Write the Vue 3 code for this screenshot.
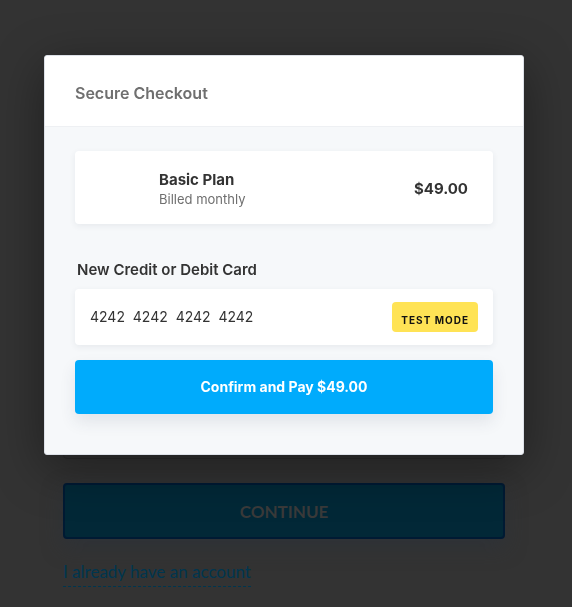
<script setup>
import { ref } from 'vue'

const plan = { name: 'Basic Plan', billing: 'Billed monthly', price: '$49.00' }
const cardNumber = ref('4242\u00a0 4242\u00a0 4242\u00a0 4242')
const email = ref('')
</script>

<template>
  <div class="page">
    <main class="signup">
      <input v-model="email" class="field" type="email" aria-label="Email" />
      <button class="continue" type="button">CONTINUE</button>
      <a class="login" href="#login">I already have an account</a>
    </main>

    <div class="overlay">
      <section class="dialog" role="dialog" aria-modal="true" aria-labelledby="checkout-title">
        <header class="head">
          <h1 id="checkout-title" class="title">Secure Checkout</h1>
        </header>
        <form class="body" @submit.prevent>
          <div class="plan">
            <div class="plan-text">
              <h2 class="plan-name">{{ plan.name }}</h2>
              <p class="plan-billing">{{ plan.billing }}</p>
            </div>
            <strong class="price">{{ plan.price }}</strong>
          </div>
          <label class="label" for="card-number">New Credit or Debit Card</label>
          <div class="card">
            <input id="card-number" v-model="cardNumber" class="number" type="text" inputmode="numeric" />
            <span class="badge">TEST MODE</span>
          </div>
          <button class="pay" type="submit">Confirm and Pay {{ plan.price }}</button>
        </form>
      </section>
    </div>
  </div>
</template>

<style>
body {
  margin: 0;
  background: #333333;
}
</style>

<style scoped>
* {
  box-sizing: border-box;
}

.page {
  min-height: 100vh;
  background: #333333;
  font-family: Lato, "Liberation Sans", sans-serif;
}

.signup {
  display: flex;
  flex-direction: column;
  align-items: flex-start;
  padding: 403px 67px 20px 63px;
}

.field {
  width: 100%;
  height: 56px;
  border: 1px solid #2b2b2b;
  border-radius: 4px;
  background: #323232;
}

.continue {
  width: 100%;
  height: 56px;
  margin-top: 24px;
  padding: 2px 0 0;
  border: 2px solid #001a33;
  border-radius: 4px;
  background: #022837;
  box-shadow: 0 8px 20px rgba(42, 49, 60, 0.5);
  color: #3a3a3a;
  font: 700 17px/24px Lato, sans-serif;
}

.login {
  margin-top: 20px;
  padding-bottom: 2px;
  border-bottom: 1px dashed #00364f;
  color: #00364f;
  font-size: 17px;
  line-height: 25px;
  text-decoration: none;
}

.overlay {
  position: fixed;
  inset: 0;
  padding: 55px 48px 20px 44px;
  font-family: Inter, "Liberation Sans", sans-serif;
  color: #333333;
}

.dialog {
  max-width: 480px;
  margin: 0 auto;
  overflow: hidden;
  border: 1px solid #dde1e8;
  border-radius: 3px;
  background: #f6f8fa;
  box-shadow: 0 12px 50px rgba(0, 0, 0, 0.4);
}

.head {
  padding: 25px 30px 21px;
  border-bottom: 1px solid #eef0f3;
  background: #ffffff;
}

.title {
  margin: 0;
  color: #6f6f6f;
  font-size: 16px;
  font-weight: 600;
  line-height: 24px;
}

.body {
  display: flex;
  flex-direction: column;
  padding: 24px 30px 40px;
}

.plan,
.card {
  display: flex;
  align-items: center;
  justify-content: space-between;
  border-radius: 4px;
  background: #ffffff;
  box-shadow: 0 2px 6px rgba(50, 60, 90, 0.08);
}

.plan {
  padding: 19px 25px 16px 84px;
}

.plan-name {
  margin: 0;
  font-size: 15px;
  font-weight: 700;
  line-height: 20px;
}

.plan-billing {
  margin: 0;
  color: #6f6f6f;
  font-size: 13px;
  line-height: 18px;
}

.price {
  font-size: 15px;
  font-weight: 700;
  line-height: 22px;
}

.label {
  margin: 36px 2px 9px;
  font-size: 15px;
  font-weight: 600;
  line-height: 20px;
}

.card {
  padding: 13px 15px;
}

.number {
  flex: 1;
  min-width: 0;
  height: 30px;
  padding: 0 0 2px;
  border: 0;
  outline: 0;
  background: transparent;
  color: #333333;
  font: 400 14px/20px Inter, sans-serif;
}

.badge {
  padding: 9px 9px 3px;
  border-radius: 4px;
  background: #ffe355;
  color: #111111;
  font-size: 10px;
  font-weight: 700;
  letter-spacing: 1px;
  line-height: 18px;
}

.pay {
  height: 54px;
  margin-top: 15px;
  border: 0;
  border-radius: 4px;
  background: #00abfc;
  box-shadow: 0 8px 16px rgba(50, 60, 90, 0.1);
  color: #ffffff;
  font: 700 14px/20px Inter, sans-serif;
}
</style>
